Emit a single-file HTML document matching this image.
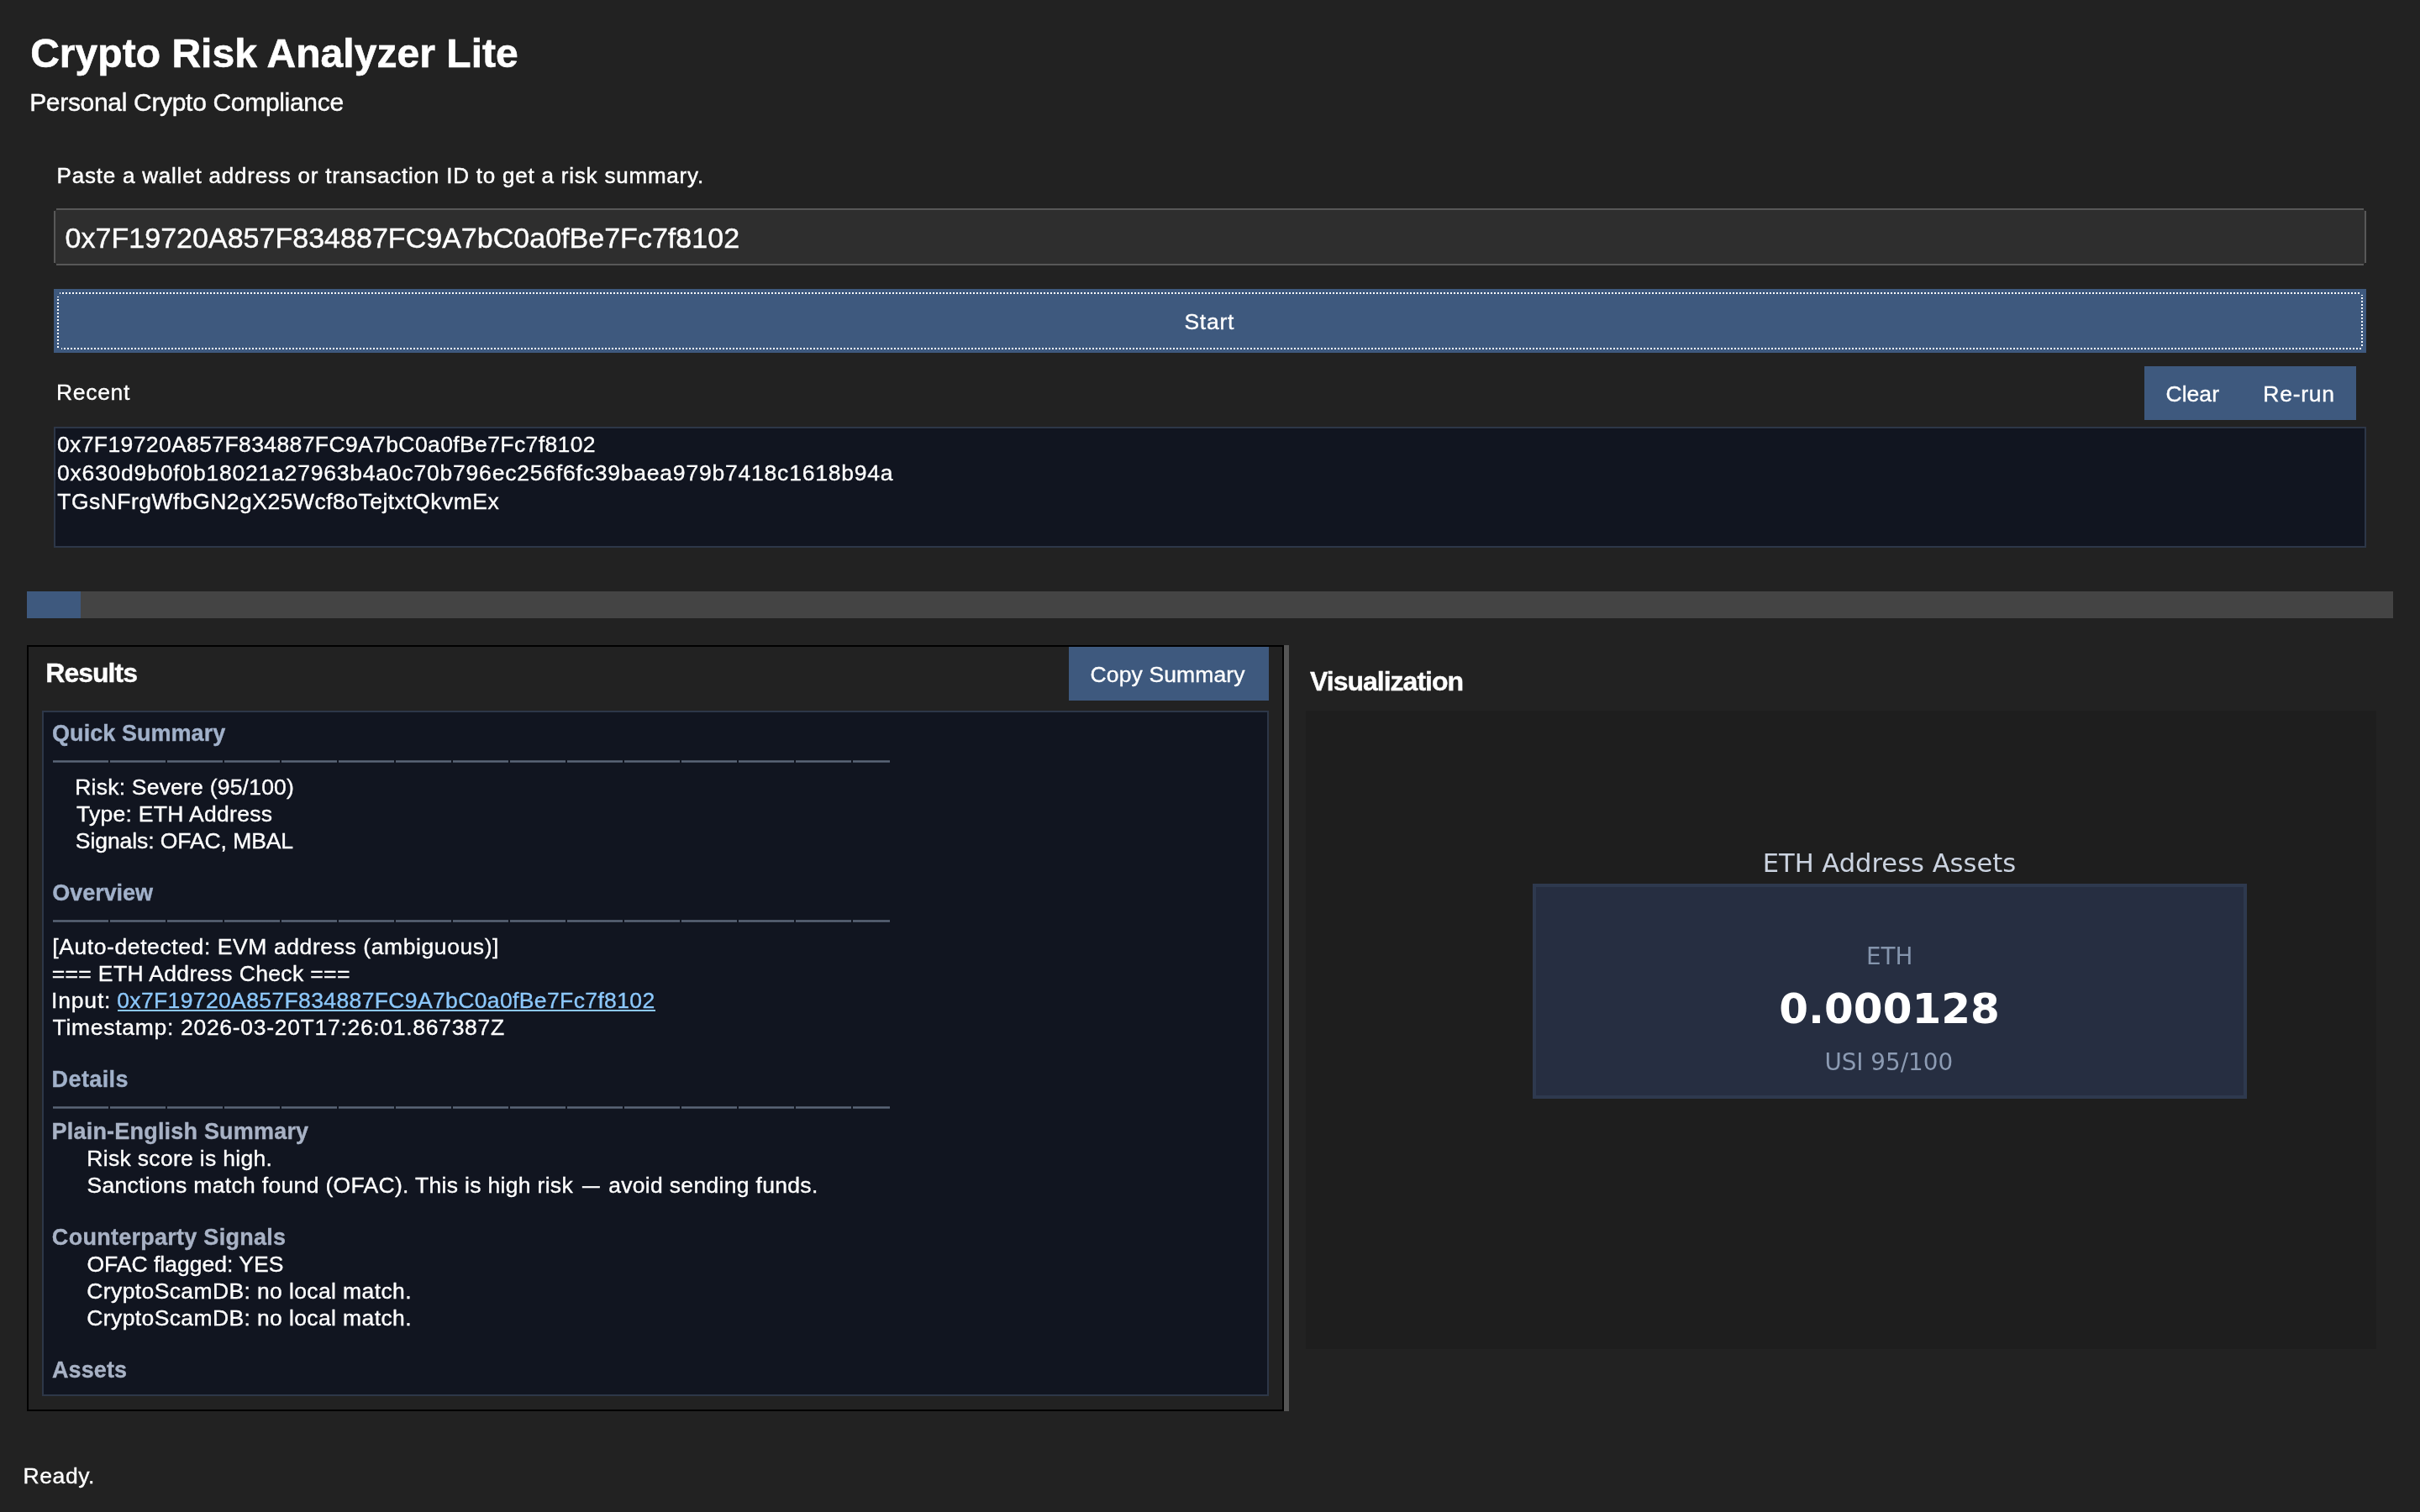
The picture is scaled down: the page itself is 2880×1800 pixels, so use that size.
<!DOCTYPE html>
<html lang="en">
<head>
<meta charset="utf-8">
<title>Crypto Risk Analyzer Lite</title>
<style>
html,body{margin:0;padding:0}
body{width:2880px;height:1800px;background:#222222;overflow:hidden;position:relative;font-family:"Liberation Sans",sans-serif;color:#fff}
.b{position:absolute;box-sizing:content-box;margin:0;padding:0}
button.b{border:0;font:inherit;color:inherit;display:block;cursor:default}
ul.b{list-style:none}
.t{position:absolute;margin:0;padding:0;line-height:1;white-space:pre;font-weight:normal;-webkit-text-stroke:0.35px currentColor}
ul.b{list-style:none}
.em{display:inline-block;transform:scaleX(.78)}
.app{position:absolute;left:0;top:0;width:2880px;height:1800px;will-change:transform}
.rule{position:absolute;width:996px;height:3px;background:linear-gradient(180deg,rgba(17,21,32,.25) 0,rgba(17,21,32,.25) 1px,transparent 1px,transparent 2px,rgba(17,21,32,.3) 2px,rgba(17,21,32,.3) 3px),repeating-linear-gradient(90deg,#5b6678 0,#5b6678 66px,transparent 66px,transparent 68px)}
</style>
</head>
<body>
<main class="app">
  <header class="b" style="left:0px;top:0px;width:0px;height:0px;">
    <h1 class="t" style="left:36.17px;top:40px;font-size:48px;color:#ffffff;font-weight:bold;letter-spacing:0.038px;-webkit-text-stroke-width:0.6px;">Crypto Risk Analyzer Lite</h1>
    <p class="t" style="left:35.18px;top:107px;font-size:30px;color:#ffffff;letter-spacing:-0.318px;-webkit-text-stroke-width:0.4px;">Personal Crypto Compliance</p>
  </header>
  <section class="b query" style="left:0px;top:0px;width:0px;height:0px;">
    <label class="t" style="left:67.53px;top:196px;font-size:26px;color:#ffffff;letter-spacing:0.791px;-webkit-text-stroke-width:0.45px;">Paste a wallet address or transaction ID to get a risk summary.</label>
    <div class="b entry" role="textbox" style="left:64px;top:248px;width:2752px;height:68px;">
      <div class="b" style="left:2px;top:2px;width:2748px;height:64px;background:#2e2e2e;"></div>
      <div class="b" style="left:3px;top:0px;width:2746px;height:2px;background:#585858;"></div>
      <div class="b" style="left:3px;top:66px;width:2746px;height:2px;background:#585858;"></div>
      <div class="b" style="left:0px;top:3px;width:2px;height:62px;background:#585858;"></div>
      <div class="b" style="left:2750px;top:3px;width:2px;height:62px;background:#585858;"></div>
      <span class="t" style="left:13.6px;top:18px;font-size:34px;color:#ffffff;letter-spacing:0.024px;-webkit-text-stroke-width:0.4px;">0x7F19720A857F834887FC9A7bC0a0fBe7Fc7f8102</span>
    </div>
    <button class="b btn start" type="button" style="left:64px;top:344px;width:2752px;height:76px;background:#3e597e;">
      <i class="b focus" style="left:7px;top:4px;width:2737px;height:2px;background:repeating-linear-gradient(90deg,#fff 0,#fff 1px,transparent 1px,transparent 3px,#fff 3px,#fff 4px);"></i>
      <i class="b focus" style="left:2746px;top:7px;width:2px;height:61px;background:repeating-linear-gradient(180deg,#fff 0,#fff 1px,transparent 1px,transparent 3px,#fff 3px,#fff 4px);"></i>
      <i class="b focus" style="left:9px;top:70px;width:2737px;height:2px;background:repeating-linear-gradient(90deg,#fff 0,#fff 1px,transparent 1px,transparent 3px,#fff 3px,#fff 4px);"></i>
      <i class="b focus" style="left:4px;top:9px;width:2px;height:61px;background:repeating-linear-gradient(180deg,#fff 0,#fff 1px,transparent 1px,transparent 3px,#fff 3px,#fff 4px);"></i>
      <span class="t" style="left:1345.44px;top:26px;font-size:26.5px;color:#ffffff;letter-spacing:0.747px;">Start</span>
    </button>
  </section>
  <section class="b recent" style="left:0px;top:0px;width:0px;height:0px;">
    <label class="t" style="left:66.93px;top:454px;font-size:26.5px;color:#ffffff;letter-spacing:0.700px;">Recent</label>
    <button class="b btn" type="button" style="left:2552px;top:436px;width:116px;height:64px;background:#3e597e;">
      <span class="t" style="left:25.49px;top:20px;font-size:26.5px;color:#ffffff;letter-spacing:0.039px;">Clear</span>
    </button>
    <button class="b btn" type="button" style="left:2668px;top:436px;width:136px;height:64px;background:#3e597e;">
      <span class="t" style="left:25.34px;top:20px;font-size:26.5px;color:#ffffff;letter-spacing:0.743px;">Re-run</span>
    </button>
    <ul class="b listbox" role="listbox" style="left:64px;top:508px;width:2748px;height:140px;background:#111520;border:2px solid #2d3748;">
      <li class="t" style="left:1.93px;top:6px;font-size:26.5px;color:#ffffff;letter-spacing:0.389px;">0x7F19720A857F834887FC9A7bC0a0fBe7Fc7f8102</li>
      <li class="t" style="left:1.93px;top:40px;font-size:26.5px;color:#ffffff;letter-spacing:0.793px;">0x630d9b0f0b18021a27963b4a0c70b796ec256f6fc39baea979b7418c1618b94a</li>
      <li class="t" style="left:2.24px;top:74px;font-size:26.5px;color:#ffffff;letter-spacing:0.485px;">TGsNFrgWfbGN2gX25Wcf8oTejtxtQkvmEx</li>
    </ul>
  </section>
  <div class="b progress" role="progressbar" style="left:32px;top:704px;width:2816px;height:32px;background:#444444;">
    <div class="b bar" style="left:0px;top:0px;width:64px;height:32px;background:#3e597e;"></div>
  </div>
  <section class="b results" style="left:32px;top:768px;width:1492px;height:908px;border:2px solid #000;">
    <h2 class="t" style="left:20.31px;top:15px;font-size:32px;color:#ffffff;font-weight:bold;letter-spacing:-0.984px;">Results</h2>
    <button class="b btn" type="button" style="left:1238px;top:0px;width:238px;height:64px;background:#3e597e;">
      <span class="t" style="left:25.49px;top:20px;font-size:26.5px;color:#ffffff;letter-spacing:0.135px;">Copy Summary</span>
    </button>
    <div class="b output" style="left:16px;top:76px;width:1456px;height:812px;background:#111520;border:2px solid #2d3748;">
      <h3 class="t" style="left:10.05px;top:12px;font-size:27px;color:#a1b1ca;font-weight:bold;letter-spacing:0.053px;">Quick Summary</h3>
      <div class="rule" role="separator" style="left:11px;top:57px;"></div>
      <div class="t" style="left:37.25px;top:76px;font-size:26.5px;color:#ffffff;letter-spacing:0.217px;">Risk: Severe (95/100)</div>
      <div class="t" style="left:38.89px;top:108px;font-size:26.5px;color:#ffffff;letter-spacing:0.302px;">Type: ETH Address</div>
      <div class="t" style="left:37.82px;top:140px;font-size:26.5px;color:#ffffff;letter-spacing:-0.078px;">Signals: OFAC, MBAL</div>
      <h3 class="t" style="left:10.27px;top:202px;font-size:27px;color:#a1b1ca;font-weight:bold;letter-spacing:-0.045px;">Overview</h3>
      <div class="rule" role="separator" style="left:11px;top:247px;"></div>
      <div class="t" style="left:10.28px;top:266px;font-size:26.5px;color:#ffffff;letter-spacing:0.589px;">[Auto-detected: EVM address (ambiguous)]</div>
      <div class="t" style="left:9.63px;top:298px;font-size:26.5px;color:#ffffff;letter-spacing:0.360px;">=== ETH Address Check ===</div>
      <span class="t" style="left:9.04px;top:330px;font-size:26.5px;color:#ffffff;letter-spacing:0.829px;">Input:</span>
      <a class="t" href="#" style="left:88px;top:330px;font-size:26.5px;color:#8cc8fc;letter-spacing:0.375px;width:640px;text-indent:-0.86px;text-decoration:none;background:linear-gradient(#8cc8fc,#8cc8fc) no-repeat 0 24px/100% 2px;">0x7F19720A857F834887FC9A7bC0a0fBe7Fc7f8102</a>
      <div class="t" style="left:10.54px;top:362px;font-size:26.5px;color:#ffffff;letter-spacing:0.702px;">Timestamp: 2026-03-20T17:26:01.867387Z</div>
      <h3 class="t" style="left:9.62px;top:424px;font-size:27px;color:#a1b1ca;font-weight:bold;letter-spacing:0.382px;">Details</h3>
      <div class="rule" role="separator" style="left:11px;top:469px;"></div>
      <h4 class="t" style="left:9.62px;top:486px;font-size:27px;color:#a8b2c5;font-weight:bold;letter-spacing:0.197px;">Plain-English Summary</h4>
      <div class="t" style="left:51.34px;top:518px;font-size:26.5px;color:#ffffff;letter-spacing:0.310px;">Risk score is high.</div>
      <div class="t" style="left:51.44px;top:550px;font-size:26.5px;color:#ffffff;letter-spacing:0.318px;">Sanctions match found (OFAC). This is high risk <span class="em">—</span> avoid sending funds.</div>
      <h4 class="t" style="left:9.87px;top:612px;font-size:27px;color:#a8b2c5;font-weight:bold;letter-spacing:0.268px;">Counterparty Signals</h4>
      <div class="t" style="left:51.44px;top:644px;font-size:26.5px;color:#ffffff;letter-spacing:0.009px;">OFAC flagged: YES</div>
      <div class="t" style="left:51.31px;top:676px;font-size:26.5px;color:#ffffff;letter-spacing:0.381px;">CryptoScamDB: no local match.</div>
      <div class="t" style="left:51.31px;top:708px;font-size:26.5px;color:#ffffff;letter-spacing:0.381px;">CryptoScamDB: no local match.</div>
      <h4 class="t" style="left:10.01px;top:770px;font-size:27px;color:#a8b2c5;font-weight:bold;letter-spacing:0.088px;">Assets</h4>
    </div>
  </section>
  <div class="b sash" style="left:1528px;top:768px;width:6px;height:912px;background:#565656;"></div>
  <section class="b viz" style="left:0px;top:0px;width:0px;height:0px;">
    <h2 class="t" style="left:1559.02px;top:795px;font-size:32px;color:#ffffff;font-weight:bold;letter-spacing:-0.998px;">Visualization</h2>
    <div class="b canvas" style="left:1554px;top:846px;width:1274px;height:760px;background:#1e1e1e;">
      <div class="t" style="left:543.68px;top:167px;font-size:30.56px;color:#cbd3e0;font-family:'DejaVu Sans',sans-serif;-webkit-text-stroke-width:0px;filter:blur(0.5px);">ETH Address Assets</div>
      <div class="b card" style="left:270px;top:206px;width:842px;height:248px;background:#262e41;border:4px solid #2e394e;">
        <div class="t" style="left:392.9px;top:69px;font-size:27.78px;color:#8595ad;font-family:'DejaVu Sans',sans-serif;-webkit-text-stroke-width:0px;filter:blur(0.5px);">ETH</div>
        <div class="t" style="left:289.29px;top:120px;font-size:50px;color:#ffffff;font-weight:bold;font-family:'DejaVu Sans',sans-serif;-webkit-text-stroke-width:0px;filter:blur(0.5px);">0.000128</div>
        <div class="t" style="left:343.42px;top:195px;font-size:27.78px;color:#8c9bb3;font-family:'DejaVu Sans',sans-serif;-webkit-text-stroke-width:0px;filter:blur(0.5px);">USI 95/100</div>
      </div>
    </div>
  </section>
  <footer class="b" style="left:0px;top:0px;width:0px;height:0px;">
    <span class="t" style="left:27.59px;top:1744px;font-size:26.5px;color:#ffffff;letter-spacing:0.572px;">Ready.</span>
  </footer>
</main>
</body>
</html>
